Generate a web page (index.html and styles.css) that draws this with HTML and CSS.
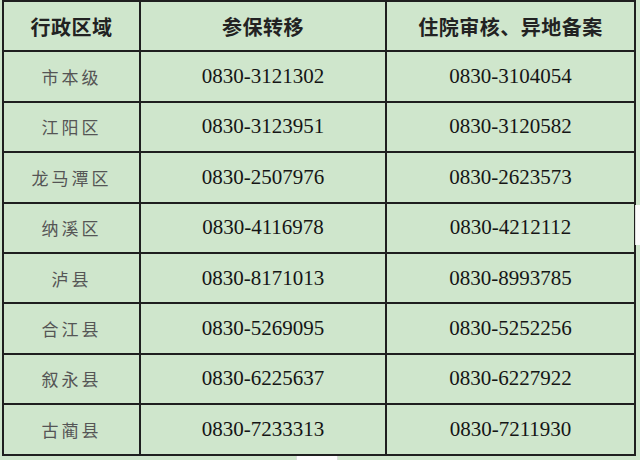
FILE: index.html
```html
<!DOCTYPE html>
<html lang="zh">
<head>
<meta charset="utf-8">
<link rel="stylesheet" href="styles.css">
</head>
<body>
<div class="page">
<table class="tbl">
  <colgroup>
    <col class="c1"><col class="c2"><col class="c3">
  </colgroup>
  <thead>
    <tr><th>行政区域</th><th>参保转移</th><th>住院审核、异地备案</th></tr>
  </thead>
  <tbody>
    <tr><td class="area">市本级</td><td class="num">0830-3121302</td><td class="num">0830-3104054</td></tr>
    <tr><td class="area">江阳区</td><td class="num">0830-3123951</td><td class="num">0830-3120582</td></tr>
    <tr><td class="area">龙马潭区</td><td class="num">0830-2507976</td><td class="num">0830-2623573</td></tr>
    <tr><td class="area">纳溪区</td><td class="num">0830-4116978</td><td class="num">0830-4212112</td></tr>
    <tr><td class="area">泸县</td><td class="num">0830-8171013</td><td class="num">0830-8993785</td></tr>
    <tr><td class="area">合江县</td><td class="num">0830-5269095</td><td class="num">0830-5252256</td></tr>
    <tr><td class="area">叙永县</td><td class="num">0830-6225637</td><td class="num">0830-6227922</td></tr>
    <tr><td class="area">古蔺县</td><td class="num">0830-7233313</td><td class="num">0830-7211930</td></tr>
  </tbody>
</table>
<div class="patch patch-right"></div>
<div class="patch patch-bottom"></div>
</div>
</body>
</html>
```

FILE: styles.css
```css
html, body {
  margin: 0;
  padding: 0;
  background: #cfe6cc;
}
.page {
  position: relative;
  width: 640px;
  height: 460px;
  overflow: hidden;
  padding-left: 2px;
  box-sizing: border-box;
}
.tbl {
  border-collapse: collapse;
  width: 632px;
  table-layout: fixed;
}
.tbl tr {
  height: 50.4px;
}
.c1 { width: 137px; }
.c2 { width: 246px; }
.c3 { width: 249px; }
.tbl th, .tbl td {
  border: 2px solid #1f1f1f;
  text-align: center;
  vertical-align: middle;
  padding: 0;
}
.tbl th {
  font-family: "Noto Sans CJK SC", sans-serif;
  font-weight: 700;
  font-size: 20px;
  color: #222;
  letter-spacing: 0.5px;
}
.area {
  font-family: "Noto Sans CJK SC", sans-serif;
  font-size: 17px;
  color: #555;
  letter-spacing: 3px;
}
.num {
  font-family: "Liberation Serif", serif;
  font-size: 21px;
  color: #151515;
}
.patch {
  position: absolute;
  background: #fcfcfc;
}
.patch-right {
  left: 635px;
  top: 205px;
  width: 5px;
  height: 40px;
  border-left: 1px solid #ddd;
}
.patch-bottom {
  left: 296px;
  top: 456px;
  width: 40px;
  height: 4px;
  border-left: 1px solid #ddd;
  border-right: 1px solid #ddd;
}
```
